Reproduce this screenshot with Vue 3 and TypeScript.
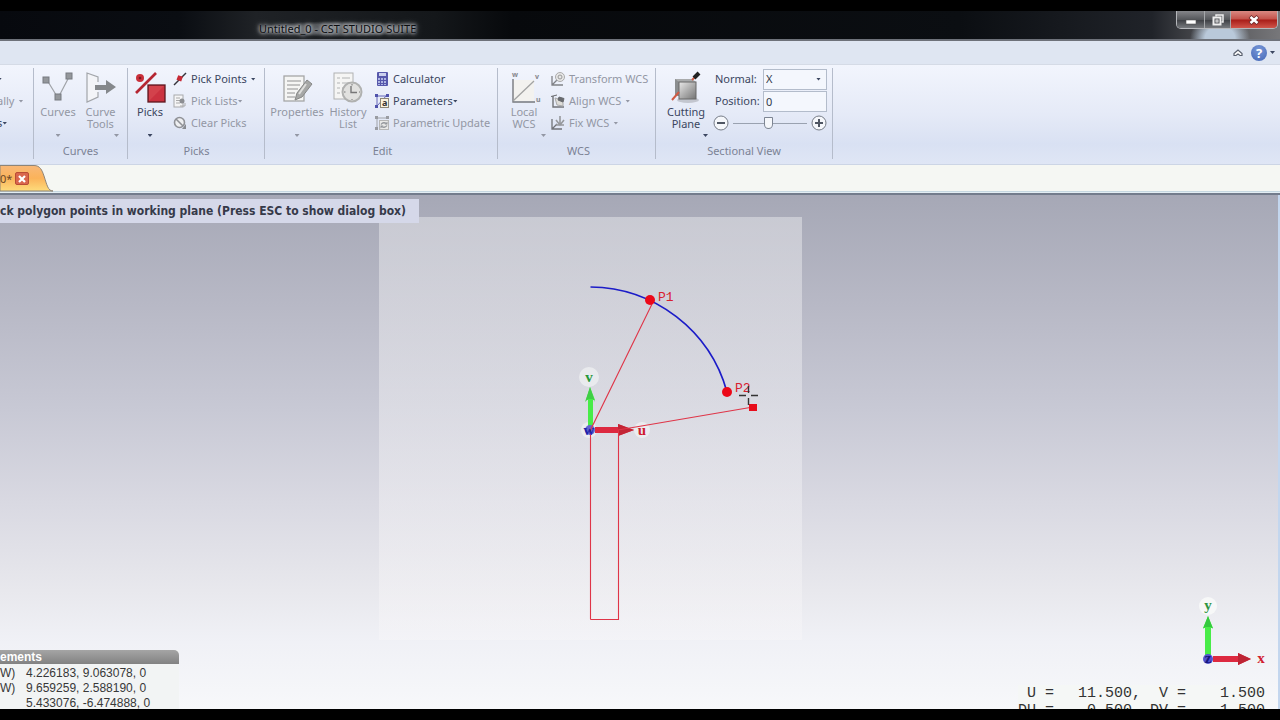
<script setup lang="ts">
import { ref } from 'vue'

const normal = ref('X')
const position = ref('0')
const slice = ref(48)

const measurements = [
  { tag: 'W)', value: '4.226183, 9.063078, 0' },
  { tag: 'W)', value: '9.659259, 2.588190, 0' },
  { tag: '', value: '5.433076, -6.474888, 0' },
]

const readout = ['U =', '11.500,', 'V =', '1.500', 'DU =', '0.500,', 'DV =', '1.500']
</script>

<template>
  <div class="window">
    <header class="titlebar">
      <h1 class="title">Untitled_0 - CST STUDIO SUITE</h1>
      <div class="winbuttons">
        <button class="wb min" aria-label="Minimize">
          <svg width="12" height="12" viewBox="0 0 12 12"><rect x="1" y="6" width="10" height="4" fill="#fff" stroke="#555" stroke-width=".6" /></svg>
        </button>
        <button class="wb max" aria-label="Restore">
          <svg width="12" height="12" viewBox="0 0 12 12" fill="none" stroke="#eee" stroke-width="1.5"><path d="M4 2.500V1H11V8H9.500" /><rect x="1.500" y="3.500" width="7" height="7" stroke-width="2" /><rect x="4" y="6" width="2" height="2" stroke-width="1" /></svg>
        </button>
        <button class="wb close" aria-label="Close">
          <svg width="12" height="12" viewBox="0 0 12 12"><path d="M2 2.500L10 9.500M10 2.500L2 9.500" stroke="#6c2a2a" stroke-width="4.200" /><path d="M2.500 3L9.500 9M9.500 3L2.500 9" stroke="#fff" stroke-width="2.600" /></svg>
        </button>
      </div>
    </header>

    <div class="helpbar">
      <button class="plain" aria-label="Collapse ribbon">
        <svg width="10" height="8" viewBox="0 0 10 8" fill="#fff" stroke="#59606e" stroke-width="1.200"><path d="M1 4.500L5 1L9 4.500V6.500H7L5 5L3 6.500H1Z" /></svg>
      </button>
      <button class="plain help" aria-label="Help">
        <span class="question">?</span><i class="caret"></i>
      </button>
    </div>

    <nav class="ribbon">
      <section class="group edge">
        <div class="tools">
          <div class="stack">
            <button class="small" aria-label="More"><i class="caret"></i></button>
            <button class="small off">ally<i class="caret wide"></i></button>
            <button class="small">s<i class="caret"></i></button>
          </div>
        </div>
      </section>

      <section class="group curves">
        <div class="tools">
          <button class="big off w48">
            <svg width="32" height="32" viewBox="0 0 32 32"><path d="M5 8L16 26L27 5" fill="none" stroke="#a0a3a8" stroke-width="1.200" /><g fill="#94979b" stroke="#777a80"><rect x="1" y="5" width="6" height="6" /><rect x="24" y="1" width="6" height="6" /><rect x="13" y="22" width="6" height="6" /></g></svg>
            <span>Curves</span><i class="caret"></i>
          </button>
          <button class="big off w37">
            <svg width="32" height="32" viewBox="0 0 32 32"><path d="M13 10V5L2 1V30L13 25V20" fill="#f3f4f8" stroke="#a2a5aa" stroke-width="1.200" /><path d="M10 13H21V8L31 15L21 22V18H10Z" fill="#85888c" /></svg>
            <span>Curve<br />Tools</span><i class="caret end"></i>
          </button>
        </div>
        <h2>Curves</h2>
      </section>

      <section class="group picks">
        <div class="tools">
          <button class="big w42">
            <svg width="32" height="32" viewBox="0 0 32 32"><path d="M2 21L22 1" stroke="#b52632" stroke-width="2.600" /><circle cx="6" cy="6" r="4" fill="#c9303b" /><circle cx="6" cy="6" r="1.300" fill="#7d1822" /><rect x="14" y="13" width="17" height="17" fill="#cb3240" stroke="#5d1820" stroke-width="1.300" /><path d="M15 14H30L15 29Z" fill="#d94c55" opacity=".6" /></svg>
            <span>Picks</span><i class="caret"></i>
          </button>
          <div class="stack">
            <button class="small">
              <svg width="14" height="14" viewBox="0 0 14 14"><path d="M1 13L13 1" stroke="#34343c" stroke-width="1.400" /><rect x="4" y="4" width="5" height="5" fill="#c62935" transform="rotate(20 7 7)" /></svg>
              Pick Points<i class="caret wide"></i>
            </button>
            <button class="small off">
              <svg width="14" height="14" viewBox="0 0 14 14"><rect x="1" y="1" width="9" height="12" fill="#f5f5f6" stroke="#a8a9ac" /><path d="M3 4H7M3 6.500H7M3 9H7" stroke="#aaa" /><circle cx="9" cy="7" r="2.500" fill="#8c8e92" /><path d="M7 12H12V9" stroke="#aaa" fill="none" /></svg>
              Pick Lists<i class="caret"></i>
            </button>
            <button class="small off">
              <svg width="14" height="14" viewBox="0 0 14 14"><path d="M9 13H13V8Z" fill="#888b90" /><circle cx="6.500" cy="6.500" r="5" fill="#eeeff1" stroke="#909297" stroke-width="1.600" /><path d="M3 3L10 10" stroke="#909297" stroke-width="1.600" /></svg>
              Clear Picks
            </button>
          </div>
        </div>
        <h2>Picks</h2>
      </section>

      <section class="group edit">
        <div class="tools">
          <button class="big off w58">
            <svg width="32" height="32" viewBox="0 0 32 32"><rect x="3" y="4" width="20" height="25" fill="#f5f5f4" stroke="#a5a6a7" stroke-width="1.300" /><path d="M6 9H20M6 13H19M6 17H17M6 21H14M6 25H14" stroke="#b2b2b3" stroke-width="1.400" /><path d="M26 8L31 12L21 25L14 28L16 21Z" fill="#a6a7a6" stroke="#868786" /><path d="M25 12L18 22" stroke="#dededc" stroke-width="2" /></svg>
            <span>Properties</span><i class="caret"></i>
          </button>
          <button class="big off w44">
            <svg width="32" height="32" viewBox="0 0 32 32"><rect x="2" y="1" width="19" height="26" fill="#f5f5f4" stroke="#b0b1b2" /><path d="M5 6H8M10 6H18M5 11H8M10 11H18M5 16H8M10 16H14M5 21H8" stroke="#b2b3b4" stroke-width="1.200" /><circle cx="20" cy="20" r="9.500" fill="#e1e1df" stroke="#b0b1b0" stroke-width="2" /><path d="M19 14V20.500H25" fill="none" stroke="#777" stroke-width="1.400" /><path d="M20 12V13.500M20 27V28M12 20H13.500M27 20H28" stroke="#777" /></svg>
            <span>History<br />List</span>
          </button>
          <div class="stack">
            <button class="small">
              <svg width="14" height="14" viewBox="0 0 14 14"><rect x="2" y="0" width="11" height="14" rx="1" fill="#5758ab" /><rect x="4" y="1" width="7" height="3" fill="#cbd0ed" /><g fill="#aeb5e2"><path d="M3 6h2v2H3zM6 6h2v2H6zM9 6h2v2H9zM3 9h2v2H3zM6 9h2v2H6zM9 9h2v2H9zM3 12h2v1H3zM6 12h2v1H6zM9 12h2v1H9z" /></g></svg>
              Calculator
            </button>
            <button class="small">
              <svg width="14" height="14" viewBox="0 0 14 14"><path d="M2 1V12M2 2H12M2 12L12 1" stroke="#6466b8" /><path d="M0 0h3v3H0zM11 0h3v3h-3zM0 11h3v3H0z" fill="#5053ac" /><rect x="5.500" y="4.500" width="8" height="9" fill="#faf2dd" stroke="#8d8676" /><text x="7" y="12" font-size="9" font-weight="bold" fill="#333">a</text></svg>
              Parameters<i class="caret"></i>
            </button>
            <button class="small off">
              <svg width="14" height="14" viewBox="0 0 14 14"><path d="M2 1V12M2 2H12" stroke="#a0a2a8" /><path d="M0 0h3v3H0zM11 0h3v3h-3zM0 11h3v3H0z" fill="#9a9ca2" /><rect x="4.500" y="4.500" width="9" height="9" fill="#e9e9e7" stroke="#b6b6b5" /><path d="M6 8.500Q8 5.500 11.500 7.500M12 9.500Q10 12.500 6.500 10.500" fill="none" stroke="#92959a" stroke-width="1.300" /><path d="M12.500 5.500V8.500H9.500ZM5.500 12.500V9.500H8.500Z" fill="#92959a" /></svg>
              Parametric Update
            </button>
          </div>
        </div>
        <h2>Edit</h2>
      </section>

      <section class="group wcs">
        <div class="tools">
          <button class="big off w44">
            <svg width="32" height="32" viewBox="0 0 32 32"><rect x="5" y="8" width="21" height="21" fill="#f3f2ef" /><path d="M5 7V30H27" fill="none" stroke="#77797e" stroke-width="1.400" /><path d="M5 29L26 9" stroke="#a2a3a3" stroke-width="1.300" /><g font-size="7" font-weight="bold" fill="#85878c"><text x="4" y="5">w</text><text x="27" y="7">v</text><text x="28" y="30">u</text></g></svg>
            <span>Local<br />WCS</span><i class="caret end"></i>
          </button>
          <div class="stack">
            <button class="small off">
              <svg width="14" height="14" viewBox="0 0 14 14"><path d="M1 4V13H12M1 13L9 5" fill="none" stroke="#808287" stroke-width="1.300" /><circle cx="9" cy="5" r="4.500" fill="#e7e7e7" stroke="#aaa" /><circle cx="9" cy="5" r="2" fill="none" stroke="#999" /></svg>
              Transform WCS
            </button>
            <button class="small off">
              <svg width="14" height="14" viewBox="0 0 14 14"><path d="M2 2V13H13" fill="none" stroke="#717378" stroke-width="1.400" /><path d="M4 4L12 6V12L6 11Z" fill="#deddd9" stroke="#aaa" /><path d="M0 2.500L6 1M8 3L13 4.500L12 8L7 6Z" fill="#686a6e" stroke="#686a6e" /></svg>
              Align WCS<i class="caret wide"></i>
            </button>
            <button class="small off">
              <svg width="14" height="14" viewBox="0 0 14 14"><path d="M1 3V13H11M1 13L6 8" fill="none" stroke="#717378" stroke-width="1.300" /><path d="M9 0V8M5 4L9 9L13 4M5 9H13" fill="none" stroke="#96989c" stroke-width="1.600" /></svg>
              Fix WCS<i class="caret wide"></i>
            </button>
          </div>
        </div>
        <h2>WCS</h2>
      </section>

      <section class="group section">
        <div class="tools">
          <button class="big w44">
            <svg width="32" height="32" viewBox="0 0 32 32"><defs><linearGradient id="cube" x2="1" y2="1"><stop stop-color="#e8e8e8" /><stop offset="1" stop-color="#747474" /></linearGradient></defs><ellipse cx="18" cy="28" rx="11" ry="3" fill="#c3c6cf" /><path d="M5 7H22V24H5Z" fill="#8a8d8f" /><path d="M5 7H22L26 10H9Z" fill="#a9abac" /><rect x="9" y="10" width="17" height="17" fill="url(#cube)" stroke="#686868" /><path d="M2 28L9 20M22 8L27 3" stroke="#cf5b45" stroke-width="2" /><path d="M24 6L29 1" stroke="#222" stroke-width="4" /></svg>
            <span>Cutting<br />Plane</span><i class="caret end"></i>
          </button>
          <div class="fields">
            <div class="field">
              <label for="normal">Normal:</label>
              <div class="selectbox">
                <select id="normal" v-model="normal"><option>X</option><option>Y</option><option>Z</option></select>
                <i class="caret"></i>
              </div>
            </div>
            <div class="field">
              <label for="position">Position:</label>
              <input id="position" v-model="position" type="text" />
            </div>
            <div class="slider">
              <button class="round" aria-label="Decrease"><svg width="16" height="16" viewBox="0 0 16 16"><circle cx="8" cy="8" r="7" fill="#f5f7fb" stroke="#777d88" /><path d="M4 8H12" stroke="#4f5663" stroke-width="2" /></svg></button>
              <input v-model="slice" type="range" min="0" max="100" aria-label="Cutting position" />
              <button class="round" aria-label="Increase"><svg width="16" height="16" viewBox="0 0 16 16"><circle cx="8" cy="8" r="7" fill="#f5f7fb" stroke="#777d88" /><path d="M4 8H12M8 4V12" stroke="#4f5663" stroke-width="2" /></svg></button>
            </div>
          </div>
        </div>
        <h2>Sectional View</h2>
      </section>
    </nav>

    <div class="tabs">
      <div class="tab">
        <svg class="tabshape" width="54" height="27" viewBox="0 0 54 27"><defs><linearGradient id="tabfill" x2="0" y2="1"><stop stop-color="#f8b878" /><stop offset=".5" stop-color="#fbb35a" /><stop offset="1" stop-color="#fddc7c" /></linearGradient></defs><path d="M0 .5H34C40 .5 42 5 44 11C47 20 48 26 53 26H0Z" fill="url(#tabfill)" stroke="#8f8577" /></svg>
        <span>0*</span>
        <button class="tabclose" aria-label="Close tab"><svg width="8" height="8" viewBox="0 0 8 8"><path d="M1 1L7 7M7 1L1 7" stroke="#fff" stroke-width="2.200" /></svg></button>
      </div>
    </div>

    <main class="canvas">
      <svg class="plane" width="424" height="424" viewBox="379 217 424 424">
        <defs><linearGradient id="sheet" x2="0" y2="1"><stop stop-color="#fff" stop-opacity=".37" /><stop offset="1" stop-color="#fbf9fa" stop-opacity=".32" /></linearGradient></defs>
        <rect x="379" y="217" width="423" height="423" fill="url(#sheet)" />
        <g fill="#f5f7f7" fill-opacity=".6"><circle cx="589" cy="377" r="10" /><circle cx="642" cy="430" r="8" /><circle cx="589" cy="430" r="8" /></g>
        <path d="M590.500 287A143 143 0 0 1 727 392" fill="none" stroke="#1c1cc8" stroke-width="1.700" />
        <path d="M588 430V400H586L590 387L595 400H593V430Z" fill="#48ec48" /><path d="M585 402L590 387L595 402L593 399H588Z" fill="#3fce45" />
        <path d="M595 427H618V424L634 430L618 436V433H595Z" fill="#dd2940" /><path d="M618 424L634 430L618 436Z" fill="#c32535" />
        <circle cx="590" cy="430" r="5" fill="#6464cf" />
        <path d="M590.500 619.500V430L653 302M618.500 430V619.500H590.500M618 430L753 407" fill="none" stroke="#df3548" stroke-width="1.100" />
        <circle cx="650" cy="300" r="5" fill="#ec0818" /><circle cx="727" cy="392" r="5" fill="#ec0818" />
        <rect x="749" y="404" width="8" height="7" fill="#e80d1c" />
        <g font-size="13" fill="#d8202e"><text x="658" y="301">P1</text><text x="735" y="392">P2</text></g>
        <path d="M739 395.500H746M751 395.500H758M748.500 386V393M748.500 398V405" stroke="#333" stroke-width="1.400" />
        <g class="axisname"><text x="589" y="382" fill="#25983a">v</text><text x="642" y="435" fill="#cf1c30">u</text><text x="589" y="435" fill="#2222a8">w</text></g>
      </svg>

      <p class="prompt">ck polygon points in working plane (Press ESC to show dialog box)</p>

      <section class="measure">
        <h3>ements</h3>
        <div v-for="(m, i) in measurements" :key="i" class="mrow"><span>{{ m.tag }}</span><span>{{ m.value }}</span></div>
      </section>

      <svg class="axes" width="80" height="80" viewBox="1190 592 80 80">
        <circle cx="1208" cy="606" r="9" fill="#f7f8f8" />
        <path d="M1205 655V628H1203L1208 616L1213 628H1211V655Z" fill="#48ec48" /><path d="M1203 629L1208 616L1213 629L1211 627H1205Z" fill="#35c83f" />
        <path d="M1213 656H1238V653L1251 659L1238 665V662H1213Z" fill="#dd2940" /><path d="M1238 653L1251 659L1238 665Z" fill="#bd2434" />
        <circle cx="1208" cy="659" r="5" fill="#5252cf" />
        <g class="axisname"><text x="1208" y="610" fill="#309541">y</text><text x="1261" y="663" fill="#d11e31">x</text><text x="1208" y="663" fill="#15157e">z</text></g>
      </svg>

      <div class="readout"><span v-for="(r, i) in readout" :key="i">{{ r }}</span></div>
    </main>
  </div>
</template>

<style>
body {
  background: #000;
}
</style>

<style scoped>
* {
  box-sizing: border-box;
}
.window {
  display: flex;
  flex-direction: column;
  height: 100vh;
  padding: 11px 0;
  background: #000;
  overflow: hidden;
  color: #3b4660;
  font: 11px/12px "Noto Sans", "Open Sans", sans-serif;
}
button {
  margin: 0;
  padding: 0;
  border: 0;
  background: none;
  color: inherit;
  font: inherit;
}
h1, h2, h3, p {
  margin: 0;
  font-weight: normal;
}
.titlebar {
  display: flex;
  justify-content: space-between;
  align-items: flex-start;
  flex: none;
  height: 30px;
  padding: 0 2px 0 259px;
  border-bottom: 2px solid #6e727a;
  background:
    radial-gradient(ellipse 30px 26px at calc(100% - 60px) 100%, #b9c9da 50%, transparent),
    linear-gradient(90deg, #07090e 0, #0a0d12 14%, #1f2226 20%, #14171a 34%, #07090c 40%, #0b0e12 75%, #202329 90%, #4b4c50 94%, #77777a 100%);
}
.title {
  margin-top: 10px;
  padding-right: 3px;
  background: radial-gradient(closest-side, #55585c 60%, transparent);
  color: #0b0d10;
  font-size: 11px;
  line-height: 16px;
  text-shadow: 0 0 3px #c8cbd0, 0 0 4px #b8bbc0, 0 0 5px #a9acb1, 0 0 8px #888;
}
.winbuttons {
  display: flex;
  height: 18px;
  border: 1px solid #b5b7bb;
  border-top: 0;
  border-radius: 0 0 5px 5px;
  overflow: hidden;
}
.wb {
  display: flex;
  align-items: center;
  justify-content: center;
  background: linear-gradient(#85868a, #55575b 50%, #3b3d42 51%, #777a7e);
}
.wb.min {
  width: 28px;
  border-right: 1px solid #a5a7aa;
}
.wb.max {
  width: 26px;
  border-right: 1px solid #a5a7aa;
}
.wb.close {
  width: 46px;
  background: linear-gradient(#d98982, #c4524a 48%, #a81d18 52%, #d0554a);
}
.helpbar {
  display: flex;
  justify-content: flex-end;
  align-items: center;
  flex: none;
  gap: 8px;
  height: 24px;
  padding-right: 5px;
  border-bottom: 1px solid #d5dbe6;
  background: #dfe6f2;
}
.plain {
  display: flex;
  align-items: center;
  gap: 3px;
}
.question {
  width: 16px;
  height: 16px;
  border-radius: 8px;
  background: radial-gradient(circle at 50% 30%, #7898d8, #4467b6);
  color: #fff;
  font: bold 13px/16px "Open Sans", sans-serif;
  text-align: center;
}
.ribbon {
  display: flex;
  flex: none;
  height: 100px;
  border-bottom: 1px solid #ccd5e5;
  background: linear-gradient(#f2f5fd, #e5eaf7 50%, #d9e1f3 80%, #dfe6f5);
}
.group {
  display: flex;
  flex-direction: column;
  flex: none;
  margin: 3px 0 5px;
  border-right: 1px solid #b5bccb;
}
.tools {
  display: flex;
  flex: 1;
}
.group h2 {
  color: #7b8295;
  font-size: 11px;
  line-height: 16px;
  text-align: center;
}
.edge { width: 34px; overflow: hidden; }
.edge .stack { margin-left: -3px; }
.curves { width: 94px; }
.picks { width: 137px; padding-left: 1px; }
.edit { width: 233px; padding-left: 3px; }
.wcs { width: 158px; padding-left: 4px; }
.section { width: 177px; padding-left: 8px; }
.section h2 { padding-right: 8px; }
.picks .stack { margin-left: 2px; }
.edit .stack { margin-left: 5px; }
.wcs .stack { margin-left: 5px; }
.big {
  display: flex;
  flex-direction: column;
  align-items: center;
  height: 70px;
  padding-top: 4px;
}
.big svg {
  overflow: visible;
}
.big > span {
  margin-top: 2px;
  white-space: nowrap;
}
.big > .caret {
  margin: auto 0 1px;
}
.big > .caret.end {
  align-self: flex-end;
}
.w37 { width: 37px; }
.w42 { width: 42px; }
.w44 { width: 44px; }
.w48 { width: 48px; }
.w58 { width: 58px; }
.off {
  color: #9397a4;
}
.caret {
  display: block;
  flex: none;
  width: 5px;
  height: 3px;
  background: currentColor;
  clip-path: polygon(0 0, 100% 0, 50% 100%);
}
.stack {
  display: flex;
  flex-direction: column;
  align-items: flex-start;
}
.small {
  display: flex;
  align-items: center;
  height: 22px;
  white-space: nowrap;
}
.small svg {
  margin-right: 4px;
}
.caret.wide {
  margin-left: 4px;
}
.fields {
  display: flex;
  flex-direction: column;
  width: 114px;
  margin-left: 5px;
}
.field {
  display: grid;
  grid-template-columns: 48px 1fr;
  align-items: center;
  height: 22px;
  padding-left: 2px;
}
.selectbox {
  display: grid;
  align-items: center;
}
.selectbox > * {
  grid-area: 1 / 1;
}
.selectbox .caret {
  justify-self: end;
  margin-right: 6px;
  pointer-events: none;
}
select,
input[type="text"] {
  appearance: none;
  width: 100%;
  height: 21px;
  padding: 0 2px;
  border: 1px solid #b3bccb;
  border-radius: 0;
  background: #f4f7fd;
  color: #333b4a;
  font: inherit;
}
.slider {
  display: flex;
  align-items: center;
  gap: 4px;
  height: 22px;
}
.round {
  display: flex;
}
input[type="range"] {
  appearance: none;
  flex: 1;
  min-width: 0;
  height: 14px;
  margin: 0;
  background: linear-gradient(#9aa2b0, #9aa2b0) center / 100% 1px no-repeat;
}
input[type="range"]::-webkit-slider-thumb {
  appearance: none;
  width: 9px;
  height: 12px;
  border: 1px solid #7d8593;
  border-radius: 1px 1px 5px 5px;
  background: #f5f7fb;
}
.tabs {
  display: flex;
  flex: none;
  height: 30px;
  border-bottom: 2px solid #737c8c;
  background: linear-gradient(#f5f7f3 26px, #a9c2cf 26px, #e2edf3 27px);
}
.tab {
  display: flex;
  position: relative;
  align-items: center;
  width: 54px;
  height: 27px;
  color: #6a4727;
  font-size: 11px;
}
.tab span {
  position: relative;
  width: 15px;
}
.tabshape {
  position: absolute;
  inset: 0;
}
.tabclose {
  display: flex;
  position: relative;
  align-items: center;
  justify-content: center;
  width: 14px;
  height: 13px;
  border: 1px solid #b94c36;
  border-radius: 2px;
  background: #d9664d;
}
.canvas {
  position: relative;
  flex: 1;
  border-right: 2px solid #c3d6ee;
  background: linear-gradient(#a6a8b6, #b8b9c6 22%, #c8c9d5 42%, #d9d9e2 60%, #e8e8ed 77%, #f0f1f6 87%, #f7f8fa);
  font-family: "Liberation Mono", monospace;
  overflow: hidden;
}
.plane {
  position: absolute;
  top: 22px;
  left: 379px;
}
.axisname {
  font: bold 15px "Liberation Serif", serif;
  text-anchor: middle;
}
.prompt {
  position: absolute;
  top: 4px;
  left: 0;
  padding-right: 13px;
  background: #d5d8e9;
  color: #363a49;
  font: bold 12px/24px "DejaVu Sans Condensed", "DejaVu Sans", sans-serif;
  white-space: nowrap;
}
.measure {
  position: absolute;
  bottom: 0;
  left: 0;
  width: 179px;
  height: 59px;
  background: #f2f4f4;
  color: #383838;
  font: 12px/15px "Liberation Sans", sans-serif;
  overflow: hidden;
}
.measure h3 {
  margin-bottom: 2px;
  border-radius: 0 5px 0 0;
  background: linear-gradient(#a5a5a5, #828282);
  color: #fff;
  font-size: 12px;
  font-weight: bold;
  line-height: 14px;
}
.mrow {
  display: grid;
  grid-template-columns: 26px 1fr;
  white-space: nowrap;
}
.axes {
  position: absolute;
  right: 8px;
  bottom: 37px;
}
.readout {
  display: grid;
  grid-template-columns: 36px 87px 45px 79px;
  position: absolute;
  right: 13px;
  bottom: -10px;
  background: #f5f7f6;
  color: #333;
  font-size: 15px;
  line-height: 17px;
  text-align: right;
  white-space: nowrap;
}
</style>
